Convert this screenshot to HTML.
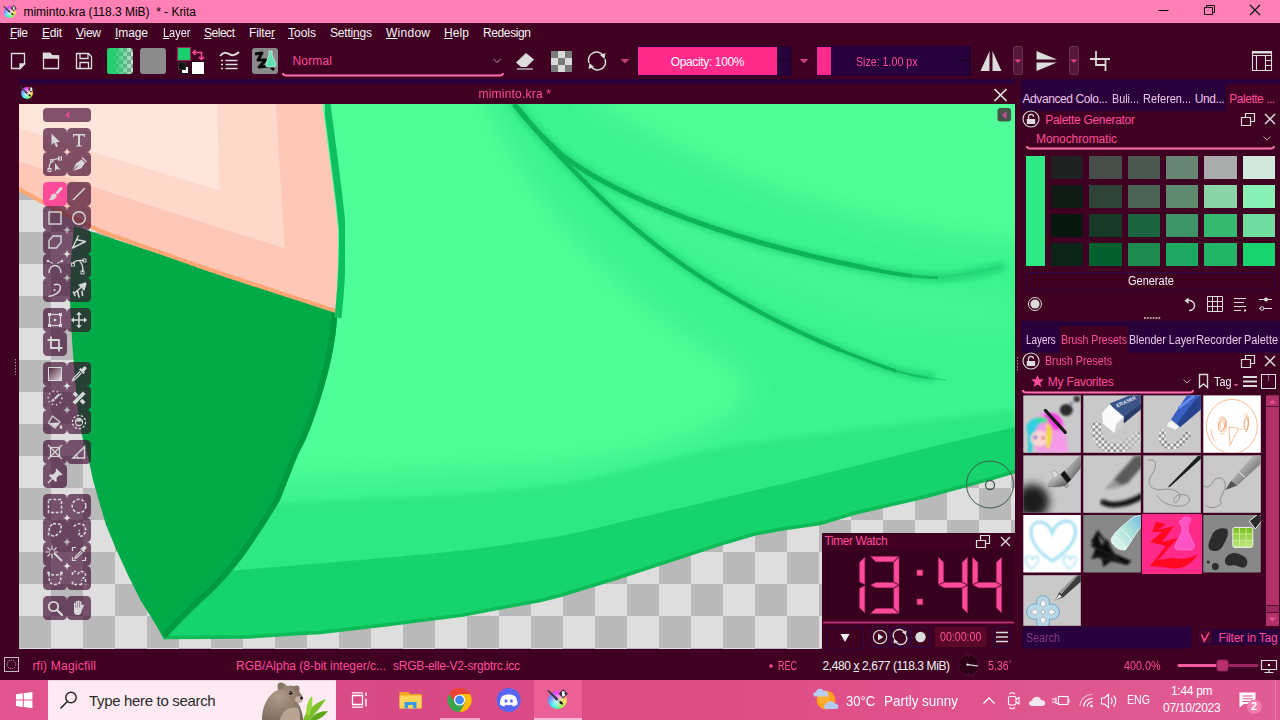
<!DOCTYPE html>
<html lang="en">
<head>
<meta charset="utf-8">
<title>miminto.kra (118.3 MiB) * - Krita</title>
<style>
*{box-sizing:border-box;margin:0;padding:0}
html,body{width:1280px;height:720px;overflow:hidden;background:#3f0022;font-family:"Liberation Sans","DejaVu Sans",sans-serif;font-size:12px;color:#f2f2f2}
.abs{position:absolute}
.t{position:absolute;white-space:nowrap;line-height:1}
.pk{color:#ff4c9a}
#titlebar{left:0;top:0;width:1280px;height:23px;background:#ff80b4}
#menubar{left:0;top:23px;width:1280px;height:21px;background:#3f0022}
#toolbar{left:0;top:44px;width:1280px;height:35px;background:#3f0022}
#strip{left:19px;top:79px;width:996px;height:5px;background:#28003c}
#canvas{left:19px;top:104px;width:996px;height:545px;overflow:hidden;background:#dedede}
#statusbar{left:0;top:652px;width:1280px;height:28px;background:#3f0022}
#taskbar{left:0;top:680px;width:1280px;height:40px;background:linear-gradient(90deg,#e2558e 0%,#d84a84 30%,#df4c86 55%,#df548d 78%,#e25c94 100%)}
.m{top:27px;font-size:13px;color:#f4f4f4}
.m u{text-decoration:underline;text-underline-offset:1px}
.tab{font-size:12.500px;color:#f0c4ea}
.tab.pk{color:#ff4c9a}
.sb{top:659.7px;font-size:12.500px}
/* SECTION-CSS */
</style>
</head>
<body>
<div id="titlebar" class="abs"></div>
<div id="menubar" class="abs"></div>
<div id="toolbar" class="abs"></div>
<div id="strip" class="abs"></div>
<div id="canvas" class="abs">
<svg class="abs" style="left:0;top:0" width="996" height="545" viewBox="19 104 996 545">
<defs>
<pattern id="chk" x="19" y="104" width="64" height="64" patternUnits="userSpaceOnUse">
<rect width="64" height="64" fill="#dedede"/><rect width="32" height="32" fill="#b9b9b9"/><rect x="32" y="32" width="32" height="32" fill="#b9b9b9"/>
</pattern>
<clipPath id="mintclip"><path id="mintp" d="M323,104 L1015,104 L1015,471.5 L992.5,478.4 L924,497 L855,513 L820,523.5 L782,529 L754.4,534 L726.7,542.2 L671,560.3 L615.5,578.5 L560,595.5 L540,600.5 L463,615 L385,625 L320,632.5 L300,633.5 L248,637 L163,637.5 L150,600 L323,300 Z"/></clipPath>
<filter id="b6" x="-20%" y="-20%" width="140%" height="140%"><feGaussianBlur stdDeviation="6"/></filter>
<filter id="b14" x="-30%" y="-30%" width="160%" height="160%"><feGaussianBlur stdDeviation="14"/></filter>
<filter id="b3" x="-20%" y="-20%" width="140%" height="140%"><feGaussianBlur stdDeviation="2.5"/></filter>
<filter id="b1"><feGaussianBlur stdDeviation="0.7"/></filter>
</defs>
<rect x="19" y="104" width="996" height="545" fill="url(#chk)"/>
<!-- mint body -->
<g clip-path="url(#mintclip)">
<rect x="19" y="104" width="996" height="545" fill="#4ffd96"/>
<!-- shading -->
<rect x="19" y="104" width="996" height="545" fill="#3cf38d"/>
<path d="M280,60 L470,60 C520,200 620,300 740,370 C780,410 680,450 560,465 L240,480 L300,300 Z" fill="#50fe98" filter="url(#b14)"/>
<path d="M590,50 L1060,50 L1060,245 C900,235 760,200 590,100 Z" fill="#50fe98" filter="url(#b14)"/>
<path d="M620,210 C700,250 800,300 900,320 L1015,330 L1015,300 C900,290 760,260 640,190 Z" fill="#4afa94" filter="url(#b14)" opacity=".8"/>
<!-- band 2 -->
<path d="M150,515 L300,502 C360,499 420,497 462,494 C500,491 530,488 560,484 C585,480 605,476 625,471 C650,465 675,458 700,452 C730,446 755,442 782,439 C820,434 860,429 900,424 L1015,410 L1015,700 L150,700 Z" fill="#2fe883" filter="url(#b3)"/>
<!-- band 3 -->
<path d="M120,580 L215,572 L300,565 C360,560 420,555 462,550.500 C500,546 530,541 560,536 C585,531 605,526 625,521 C655,514 680,508 706,502 C735,495 760,489 782,484 L855,466 L935,446 L1015,427 L1015,700 L120,700 Z" fill="#18d46c" filter="url(#b1)"/>
</g>
<!-- bottom edge darker line -->
<path d="M1015,471.5 L992.5,478.4 L924,497 L855,513 L820,523.5 L782,529 L754.4,534 L726.7,542.2 L671,560.3 L615.5,578.5 L560,595.5 L540,600.5 L463,615 L385,625 L320,632.5 L300,633.5 L248,637 L163,637.5" fill="none" stroke="#0cba56" stroke-width="3.5" filter="url(#b1)"/>
<!-- hair strokes -->
<g fill="none" stroke="#22d878" stroke-linecap="round" filter="url(#b3)" opacity=".8">
<path d="M515,105 C530,125 545,140 562,155 C600,185 700,235 866,268 C900,275 930,279 950,277 C970,275 990,270 1000,267" stroke-width="11"/>
<path d="M519,109 C535,130 550,147 575,172 C640,240 720,300 866,361 C890,370 910,375 931,377" stroke-width="10"/>
</g>
<g fill="none" stroke="#0db458" stroke-linecap="butt" filter="url(#b1)">
<path d="M514,104 C530,125 545,140 562,155 C600,185 700,235 866,268" stroke-width="5"/>
<path d="M866,268 C885,272 900,274.500 912,276" stroke-width="4"/>
<path d="M912,276 C922,277 930,277.500 938,277.500" stroke-width="2.800" opacity=".8"/>
<path d="M938,277.500 C960,276 985,270 1000,267" stroke="#20d070" stroke-width="2.500" opacity=".5"/>
<path d="M519,109 C535,130 550,147 575,172 C640,240 720,300 840,350" stroke-width="4.500"/>
<path d="M840,350 C860,358 880,366 896,371" stroke-width="3.500"/>
<path d="M896,371 C908,374.500 918,376.500 928,378" stroke-width="2.300" opacity=".75"/>
<path d="M928,378 C934,379 940,379.500 946,380" stroke-width="1.500" opacity=".4"/>
</g>
<!-- dark green -->
<path d="M74,226 L337.5,312 C336,345 328,375 320,400 C312,425 306,440 300,450 C292,468 286,485 280,500 C268,520 258,535 247.5,550 C235,568 215,590 202.5,600 C190,612 178,624 167,636 L163.300,638 L156,625 L140.400,600 L128,575 L116.500,550 L106,525 L98.700,500 L93,480 L87.700,455 L83,440 L79,420 L75,380 L72,340 L70,300 L71,260 Z" fill="#00ab47"/>
<path d="M337.5,312 C336,345 328,375 320,400 C312,425 306,440 300,450 C292,468 286,485 280,500 C268,520 258,535 247.5,550 C235,568 215,590 202.5,600 C190,612 178,624 167,636" fill="none" stroke="#00953c" stroke-width="6" opacity=".7" filter="url(#b1)" transform="translate(-3,0)"/>
<!-- peach -->
<path d="M19,104 L322.500,104 C328,150 336,200 338,230 C338.500,260 337,290 336,312 C300,300 260,288 199,267 C160,253 130,243 100,232 C70,218 40,202 19,190 Z" fill="#ffc7b7"/>
<path d="M19,104 L276,104 L284.500,248 C200,222 100,190 19,161 Z" fill="#ffd8cc" filter="url(#b1)"/>
<path d="M19,104 L217,104 L219.500,190 C150,170 80,148 19,128 Z" fill="#ffe6dc" filter="url(#b1)"/>
<!-- orange edge -->
<path d="M336,311 C300,299 260,287 199,266 C160,252 130,242 100,231 C70,217 40,201 19,189" fill="none" stroke="#ffa674" stroke-width="4" filter="url(#b1)"/>
<!-- green outline right of peach -->
<path d="M327,104 C333,150 340,200 342.500,230 C343,260 341,290 338,318" fill="none" stroke="#0fbf5e" stroke-width="7" filter="url(#b1)"/>
<!-- brush cursor -->
<circle cx="990" cy="484.500" r="23.500" fill="none" stroke="#3d5a48" stroke-width="1"/>
<circle cx="990" cy="485" r="4.500" fill="none" stroke="#3d5a48" stroke-width="1.300"/>
</svg>

</div>
<!-- TOOLBOX-START -->
<svg class="abs" style="left:43px;top:108px" width="48" height="516" viewBox="43 108 48 516">
<rect x="43" y="108" width="48" height="14" rx="4" fill="rgba(60,5,44,.65)"/><path d="M65,115 L69.500,111 V119 Z" fill="#d84a8c"/>
<g transform="translate(43,128)"><rect width="24" height="24" rx="4.500" fill="rgba(60,5,44,.65)"/><path d="M8.500,5.500 V17 L11.200,14.600 L13,19 L15,18.200 L13.200,14 H17 Z" fill="#d8d8d8"/></g>
<g transform="translate(67,128)"><rect width="24" height="24" rx="4.500" fill="rgba(60,5,44,.65)"/><path d="M6,6 H18 V9 H17 V7.500 H13 V17.500 H15 V18.500 H9 V17.500 H11 V7.500 H7 V9 H6 Z" fill="#d8d8d8"/></g>
<g transform="translate(43,152)"><rect width="24" height="24" rx="4.500" fill="rgba(60,5,44,.65)"/><path d="M6,18 C6,11 8,7 17,6.500" fill="none" stroke="#d8d8d8" stroke-width="1.200"/><rect x="5" y="16.500" width="3" height="3" fill="none" stroke="#d8d8d8"/><rect x="15.500" y="5" width="3" height="3" fill="none" stroke="#d8d8d8"/><rect x="7.500" y="7.500" width="2.500" height="2.500" fill="none" stroke="#d8d8d8" stroke-width=".8"/><path d="M12,11 V19 L14.200,16.800 L17.500,18 Z" fill="#d8d8d8"/></g>
<g transform="translate(67,152)"><rect width="24" height="24" rx="4.500" fill="rgba(60,5,44,.65)"/><path d="M5.500,19 L9,11.500 L14.500,7.500 L18,11 L14,16.500 Z" fill="#d8d8d8"/><path d="M15,5.500 L19.500,10" stroke="#d8d8d8" stroke-width="1.400"/><path d="M5.500,19 L11,13.500" stroke="#6a3a52" stroke-width="1"/></g>
<g transform="translate(43,182)"><rect width="24" height="24" rx="4.500" fill="#ff4c9a"/><path d="M18.500,5 C19.500,5.500 19.800,6.500 19,7.500 L14.500,12.500 L12.500,10.800 L16.800,5.600 C17.300,5 18,4.800 18.500,5 Z M11.800,11.600 L13.800,13.300 C13.500,16.500 10.500,18.500 5.500,18.200 C7.500,17 7.500,15 8.200,13.500 C9,12 10.500,11.300 11.800,11.600 Z" fill="#d8d8d8"/></g>
<g transform="translate(67,182)"><rect width="24" height="24" rx="4.500" fill="rgba(60,5,44,.65)"/><path d="M6,18 L18,6" stroke="#d8d8d8" stroke-width="1.500"/></g>
<g transform="translate(43,206)"><rect width="24" height="24" rx="4.500" fill="rgba(60,5,44,.65)"/><rect x="6" y="6" width="12" height="12" fill="none" stroke="#d8d8d8" stroke-width="1.400"/></g>
<g transform="translate(67,206)"><rect width="24" height="24" rx="4.500" fill="rgba(60,5,44,.65)"/><circle cx="12" cy="12" r="6.300" fill="none" stroke="#d8d8d8" stroke-width="1.400"/></g>
<g transform="translate(43,230)"><rect width="24" height="24" rx="4.500" fill="rgba(60,5,44,.65)"/><path d="M10,6 H18 V12.500 L13.500,18 H6 V10.500 Z" fill="none" stroke="#d8d8d8" stroke-width="1.400"/></g>
<g transform="translate(67,230)"><rect width="24" height="24" rx="4.500" fill="rgba(60,5,44,.65)"/><path d="M11.500,5.500 L5.500,18 L18.500,11.500 L9,9.500" fill="none" stroke="#d8d8d8" stroke-width="1.400" stroke-linejoin="round"/></g>
<g transform="translate(43,254)"><rect width="24" height="24" rx="4.500" fill="rgba(60,5,44,.65)"/><path d="M6,19 C6,9 18,9 18,19" fill="none" stroke="#d8d8d8" stroke-width="1.400"/><path d="M5,7 L10,9.500 M19,7 L14,9.500" stroke="#d8d8d8" stroke-width="1"/><circle cx="5" cy="7" r="1.300" fill="#d8d8d8"/><circle cx="19" cy="7" r="1.300" fill="#d8d8d8"/></g>
<g transform="translate(67,254)"><rect width="24" height="24" rx="4.500" fill="rgba(60,5,44,.65)"/><path d="M6,10 C7,6.500 12,6 17,6.500 M12,6.200 C15,9 16.500,13 15.500,18" fill="none" stroke="#d8d8d8" stroke-width="1.400"/><rect x="4.500" y="9" width="3" height="3" fill="none" stroke="#d8d8d8" stroke-width=".9"/><rect x="16" y="5" width="3" height="3" fill="none" stroke="#d8d8d8" stroke-width=".9"/><rect x="14" y="17" width="3" height="3" fill="none" stroke="#d8d8d8" stroke-width=".9"/></g>
<g transform="translate(43,278)"><rect width="24" height="24" rx="4.500" fill="rgba(60,5,44,.65)"/><path d="M5.500,18.500 C12,17.500 17.500,14 17.500,9.500 C17.500,6.500 14,5.500 11,7" fill="none" stroke="#d8d8d8" stroke-width="1.400"/><circle cx="11.500" cy="12" r="1.100" fill="#d8d8d8"/></g>
<g transform="translate(67,278)"><rect width="24" height="24" rx="4.500" fill="rgba(60,5,44,.65)"/><path d="M19,5 L12.500,7 L14.500,9 L7,15.500 M19,5 L17,11.500 L15,9.500" fill="none" stroke="#d8d8d8" stroke-width="1.500"/><path d="M19,5 L13,6.500 L17.500,11 Z" fill="#d8d8d8"/><path d="M6.500,14 L8,17.500 M10.500,13 L12,19 M15,13 L15.500,17.500" stroke="#d8d8d8" stroke-width="1.600" stroke-linecap="round"/></g>
<g transform="translate(43,308)"><rect width="24" height="24" rx="4.500" fill="rgba(60,5,44,.65)"/><rect x="6.500" y="6.500" width="11" height="11" fill="none" stroke="#d8d8d8" stroke-width="1.300"/><g fill="#d8d8d8"><rect x="5" y="5" width="3" height="3"/><rect x="16" y="5" width="3" height="3"/><rect x="5" y="16" width="3" height="3"/><rect x="16" y="16" width="3" height="3"/><rect x="10.800" y="10.800" width="2.400" height="2.400"/></g></g>
<g transform="translate(67,308)"><rect width="24" height="24" rx="4.500" fill="rgba(60,5,44,.65)"/><path d="M12,5 V19 M5,12 H19" stroke="#d8d8d8" stroke-width="1.500"/><path d="M12,3.800 L14.800,7 H9.200 Z M12,20.200 L14.800,17 H9.200 Z M3.800,12 L7,9.200 V14.800 Z M20.200,12 L17,9.200 V14.800 Z" fill="#d8d8d8"/></g>
<g transform="translate(43,332)"><rect width="24" height="24" rx="4.500" fill="rgba(60,5,44,.65)"/><path d="M8,4.500 V16 H19.500 M4.500,8 H16 V19.500" fill="none" stroke="#d8d8d8" stroke-width="1.800"/></g>
<g transform="translate(43,362)"><rect width="24" height="24" rx="4.500" fill="rgba(60,5,44,.65)"/><defs><linearGradient id="tg" x1="0" y1="0" x2="1" y2="1"><stop offset="0" stop-color="#4a2038"/><stop offset="1" stop-color="#e8e0e4"/></linearGradient></defs><rect x="5.500" y="5.500" width="13" height="13" fill="url(#tg)" stroke="#d8d8d8" stroke-width="1"/></g>
<g transform="translate(67,362)"><rect width="24" height="24" rx="4.500" fill="rgba(60,5,44,.65)"/><path d="M17,4.500 C18.500,4 20,5.500 19.500,7 L17,9.500 L18,10.500 L16.500,12 L12,7.500 L13.500,6 L14.500,7 Z" fill="#d8d8d8"/><path d="M13,9.500 L6.500,16 L5.500,18.500 L8,17.500 L14.500,11" fill="none" stroke="#d8d8d8" stroke-width="1.300"/></g>
<g transform="translate(43,386)"><rect width="24" height="24" rx="4.500" fill="rgba(60,5,44,.65)"/><path d="M15.500,7.500 L11,12 L12.500,13.500 L17,9 Z M10.300,12.600 C9,13 9,14.500 7.800,15.300 C9.500,16 11.500,15.300 11.800,14 Z" fill="#d8d8d8"/><circle cx="12" cy="12" r="6.800" fill="none" stroke="#d8d8d8" stroke-width="1.600" stroke-dasharray="1.300 2.900"/></g>
<g transform="translate(67,386)"><rect width="24" height="24" rx="4.500" fill="rgba(60,5,44,.65)"/><path d="M8,5.500 L11.300,8.800 L8.800,11.300 L5.500,8 Z M15.200,12.700 L18.500,16 L16,18.500 L12.700,15.200 Z M16,5.500 L18.500,8 L8,18.500 L5.500,16 Z" fill="#d8d8d8"/></g>
<g transform="translate(43,410)"><rect width="24" height="24" rx="4.500" fill="rgba(60,5,44,.65)"/><path d="M9.500,6 L17,12 L12,18 L5.500,13 Z" fill="none" stroke="#d8d8d8" stroke-width="1.200"/><path d="M6.500,13 L16,12.500 L12,17.300 Z" fill="#d8d8d8"/><path d="M18,14.500 C19.200,16.300 19.300,17 19.300,17.500 C19.300,18.300 18.700,18.800 18,18.800 C17.300,18.800 16.700,18.300 16.700,17.500 C16.700,17 16.900,16.300 18,14.500 Z" fill="#d8d8d8"/></g>
<g transform="translate(67,410)"><rect width="24" height="24" rx="4.500" fill="rgba(60,5,44,.65)"/><circle cx="12" cy="12" r="6.600" fill="none" stroke="#d8d8d8" stroke-width="1.300" stroke-dasharray="2.400 1.700"/><circle cx="12" cy="12" r="3.600" fill="none" stroke="#d8d8d8" stroke-width="1.100"/><path d="M8.800,11.500 H15.200 A3.300,3.300 0 0 0 8.800,11.500 Z" fill="#d8d8d8"/></g>
<g transform="translate(43,440)"><rect width="24" height="24" rx="4.500" fill="rgba(60,5,44,.65)"/><rect x="7.500" y="7.500" width="9" height="9" fill="none" stroke="#d8d8d8" stroke-width="1.200"/><path d="M5,5 L19,19 M19,5 L5,19" stroke="#d8d8d8" stroke-width="1.300"/></g>
<g transform="translate(67,440)"><rect width="24" height="24" rx="4.500" fill="rgba(60,5,44,.65)"/><path d="M6,18 L17.500,6.700 V18 Z" fill="none" stroke="#d8d8d8" stroke-width="1.500"/><path d="M10.500,18 A4.500,4.500 0 0 0 9.300,14.800" fill="none" stroke="#d8d8d8" stroke-width="1.100"/></g>
<g transform="translate(43,464)"><rect width="24" height="24" rx="4.500" fill="rgba(60,5,44,.65)"/><path d="M13.500,4.500 L19.500,10.500 L18,11.500 L16.500,11 L13.500,14 L13.800,17 L12.500,18 L6,11.500 L7,10.200 L10,10.500 L13,7.500 L12.500,6 Z" fill="#d8d8d8"/><path d="M9.500,14.500 L5,19" stroke="#d8d8d8" stroke-width="1.400"/></g>
<g transform="translate(43,494)"><rect width="24" height="24" rx="4.500" fill="rgba(60,5,44,.65)"/><rect x="5.500" y="5.500" width="13" height="13" fill="none" stroke="#d8d8d8" stroke-width="1.600" stroke-dasharray="3 1.800"/></g>
<g transform="translate(67,494)"><rect width="24" height="24" rx="4.500" fill="rgba(60,5,44,.65)"/><circle cx="12" cy="12" r="6.800" fill="none" stroke="#d8d8d8" stroke-width="1.600" stroke-dasharray="3 1.900"/></g>
<g transform="translate(43,518)"><rect width="24" height="24" rx="4.500" fill="rgba(60,5,44,.65)"/><path d="M10,5.500 L18.500,6.500 L17.500,13.500 L12,18.500 L5.500,16.500 L6.500,9 Z" fill="none" stroke="#d8d8d8" stroke-width="1.600" stroke-dasharray="3 1.800"/></g>
<g transform="translate(67,518)"><rect width="24" height="24" rx="4.500" fill="rgba(60,5,44,.65)"/><path d="M7,8.500 C9,5 16,4.500 18,9 C20,13.500 17,18 13,18.500 C11.500,18.500 11.500,16.500 12.500,15.500 C13.500,14.500 13,12.500 11.500,12.500" fill="none" stroke="#d8d8d8" stroke-width="1.600" stroke-dasharray="2.800 1.700"/></g>
<g transform="translate(43,542)"><rect width="24" height="24" rx="4.500" fill="rgba(60,5,44,.65)"/><path d="M11,11 L19,19" stroke="#d8d8d8" stroke-width="2"/><path d="M9,3.500 V8 M9,12 V16.500 M2.500,10 H7 M11,10 H15 M4.500,5.500 L7.500,8.500 M13.500,5.500 L10.500,8.500 M4.500,14.500 L7.500,11.500" stroke="#d8d8d8" stroke-width="1.200"/></g>
<g transform="translate(67,542)"><rect width="24" height="24" rx="4.500" fill="rgba(60,5,44,.65)"/><path d="M5.500,9 V5.500 H9 M15,5.500 H18.500 M18.500,15 V18.500 H15 M9,18.500 H5.500 V15" fill="none" stroke="#d8d8d8" stroke-width="1.200"/><path d="M17,4 C18.500,3.600 19.800,5 19.400,6.500 L17.300,8.600 L18,9.300 L16.800,10.500 L13.300,7 L14.500,5.800 L15.200,6.500 Z" fill="#d8d8d8"/><path d="M14,9 L8.500,14.500 L7.800,16.500 L9.800,15.800 L15.300,10.300" fill="none" stroke="#d8d8d8" stroke-width="1.100"/></g>
<g transform="translate(43,566)"><rect width="24" height="24" rx="4.500" fill="rgba(60,5,44,.65)"/><path d="M6,7.500 C6,16 7,18.500 12,18.500 C17,18.500 18,16 18,7.500 C15,9.500 9,9.500 6,7.500 Z" fill="none" stroke="#d8d8d8" stroke-width="1.600" stroke-dasharray="2.800 1.700"/><circle cx="5.500" cy="7" r="1.400" fill="#d8d8d8"/><circle cx="18.500" cy="7" r="1.400" fill="#d8d8d8"/></g>
<g transform="translate(67,566)"><rect width="24" height="24" rx="4.500" fill="rgba(60,5,44,.65)"/><path d="M5.500,9 V5.500 H9 M15,18.500 H5.500 V14" fill="none" stroke="#d8d8d8" stroke-width="1.600" stroke-dasharray="3 1.800"/><path d="M11,8.500 C11,4.500 18.500,4.500 18.500,9 C18.500,12 14.500,12 14.500,15" fill="none" stroke="#d8d8d8" stroke-width="1.600" stroke-dasharray="2.800 1.500"/><circle cx="14.500" cy="18" r="1" fill="#d8d8d8"/><path d="M18.500,13 V18.500" stroke="#d8d8d8" stroke-width="1.600" stroke-dasharray="3 1.800"/></g>
<g transform="translate(43,596)"><rect width="24" height="24" rx="4.500" fill="rgba(60,5,44,.65)"/><circle cx="10.500" cy="10.500" r="4.700" fill="none" stroke="#d8d8d8" stroke-width="1.800"/><path d="M14,14 L19,19" stroke="#d8d8d8" stroke-width="2.400" stroke-linecap="round"/></g>
<g transform="translate(67,596)"><rect width="24" height="24" rx="4.500" fill="rgba(60,5,44,.65)"/><path d="M7,12 V7.500 C7,6.300 8.800,6.300 8.800,7.500 V6 C8.800,4.700 10.700,4.700 10.700,6 V5.500 C10.700,4.200 12.600,4.200 12.600,5.500 V6.200 C12.600,5 14.500,5 14.500,6.200 V9.500 C15,8.500 16.500,8 17,9 L15,14 C14.500,16.500 13.500,19 11.500,19 H10 C8,19 7,17.500 7,15.500 Z" fill="#d8d8d8"/><path d="M8.800,7.500 V12 M10.700,6 V11.500 M12.600,6 V11.500" stroke="#6a3a52" stroke-width=".5"/></g>
</svg>
<!-- TOOLBOX-END -->
<!-- ===== right docker 1 ===== -->
<div class="abs" style="left:1021px;top:79px;width:259px;height:32px;background:#28003c"></div>
<div class="abs" style="left:1226px;top:84px;width:54px;height:27px;background:#3f0022;border-radius:3px 0 0 0"></div>
<div class="t tab" style="left:1022.5px;top:93px;font-size:12px;letter-spacing:-0.419px">Advanced Colo...</div>
<div class="t tab" style="left:1111.6px;top:93px;font-size:12px;letter-spacing:0px;transform:scaleX(0.8962);transform-origin:0 0">Buli...</div>
<div class="t tab" style="left:1143.3px;top:93px;font-size:12px;letter-spacing:0px;transform:scaleX(0.9127);transform-origin:0 0">Referen...</div>
<div class="t tab" style="left:1194.7px;top:93px;font-size:12px;letter-spacing:-0.403px">Und...</div>
<div class="t tab pk" style="left:1229.3px;top:93px;font-size:12px;letter-spacing:-0.480px">Palette ...</div>
<svg class="abs" style="left:1021px;top:110px" width="259" height="212" viewBox="1021 110 259 212">
<!-- lock -->
<g id="lockic"><circle cx="1031" cy="119" r="8" fill="none" stroke="#dcdcdc" stroke-width="1.100"/><rect x="1026.800" y="119" width="8.400" height="5" fill="#dcdcdc"/><path d="M1028.500,119 V116.800 A2.500,2.500 0 0 1 1033.500,116.800" fill="none" stroke="#dcdcdc" stroke-width="1.200"/></g>
<g id="floatic" fill="none" stroke="#dcdcdc" stroke-width="1.200"><path d="M1241.500,117.500 H1250.500 V125.500 H1241.500 Z"/><path d="M1245.500,117.500 V113.500 H1254.500 V121.500 H1250.500"/></g>
<path id="closeic" d="M1265,114 L1275,124 M1275,114 L1265,124" stroke="#dcdcdc" stroke-width="1.500"/>
<!-- combo underline -->
<path d="M1027,146 Q1027,148.500 1030,148.500 H1271 Q1274,148.500 1274,146" fill="none" stroke="#ff6eb0" stroke-width="1.900"/>
<path d="M1263.500,136.500 L1267,140 L1270.500,136.500" fill="none" stroke="#b8a0ac" stroke-width="1"/>
<!-- palette -->
<rect x="1026" y="156" width="19" height="110" fill="#2fe984"/>
<g>
<rect x="1051" y="156" width="32" height="23" fill="#202221"/><rect x="1089" y="156" width="33" height="23" fill="#474e4a"/><rect x="1128" y="156" width="32" height="23" fill="#4a584f"/><rect x="1166" y="156" width="32" height="23" fill="#668572"/><rect x="1204" y="156" width="33" height="23" fill="#a9acaa"/><rect x="1243" y="156" width="32" height="23" fill="#d3e8dc"/>
<rect x="1051" y="185" width="32" height="23" fill="#101b15"/><rect x="1089" y="185" width="33" height="23" fill="#2f4338"/><rect x="1128" y="185" width="32" height="23" fill="#4a6454"/><rect x="1166" y="185" width="32" height="23" fill="#5e8a70"/><rect x="1204" y="185" width="33" height="23" fill="#8ad4a8"/><rect x="1243" y="185" width="32" height="23" fill="#88f0b4"/>
<rect x="1051" y="214" width="32" height="23" fill="#08170e"/><rect x="1089" y="214" width="33" height="23" fill="#173a27"/><rect x="1128" y="214" width="32" height="23" fill="#1c6440"/><rect x="1166" y="214" width="32" height="23" fill="#3e9467"/><rect x="1204" y="214" width="33" height="23" fill="#35b872"/><rect x="1243" y="214" width="32" height="23" fill="#70dca0"/>
<rect x="1051" y="243" width="32" height="23" fill="#0a2417"/><rect x="1089" y="243" width="33" height="23" fill="#04602f"/><rect x="1128" y="243" width="32" height="23" fill="#1e8a50"/><rect x="1166" y="243" width="32" height="23" fill="#1ca860"/><rect x="1204" y="243" width="33" height="23" fill="#22b468"/><rect x="1243" y="243" width="32" height="23" fill="#18d46c"/>
</g>
<!-- generate button -->
<rect x="1026.500" y="272.500" width="248" height="17" rx="2" fill="#3f0022" stroke="#2a0a4a" stroke-width="1"/>
<!-- icon row -->
<circle cx="1035" cy="304" r="6.500" fill="none" stroke="#dcdcdc" stroke-width="1"/><circle cx="1035" cy="304" r="4.600" fill="#dcdcdc"/>
<path d="M1186,300.500 C1191,299.500 1194.500,302 1194.500,305.500 C1194.500,308.500 1192,310.500 1189,310.500" fill="none" stroke="#dcdcdc" stroke-width="1.400"/><path d="M1184.500,300.800 L1188.500,297.500 V304 Z" fill="#dcdcdc"/>
<path d="M1207.500,296.500 H1222.500 V311.500 H1207.500 Z M1212.500,296.500 V311.500 M1217.500,296.500 V311.500 M1207.500,301.500 H1222.500 M1207.500,306.500 H1222.500" fill="none" stroke="#dcdcdc" stroke-width="1"/>
<path d="M1234,298.500 H1246 M1234,302.500 H1244 M1234,306.500 H1246 M1234,310.500 H1241" stroke="#dcdcdc" stroke-width="1.100"/><rect x="1244" y="309.500" width="2" height="2" fill="#dcdcdc"/>
<path d="M1259,299.500 H1272 M1259,308.500 H1272" stroke="#dcdcdc" stroke-width="1.100"/><circle cx="1266" cy="299.500" r="2" fill="#dcdcdc"/><circle cx="1262" cy="308.500" r="1.800" fill="#3f0022" stroke="#dcdcdc" stroke-width="1"/>
<!-- dots -->
<path d="M1144,318 H1161" stroke="#b8a0b0" stroke-width="1.800" stroke-dasharray="1.700 1.200"/>
</svg>
<div class="t pk" style="left:1045.3px;top:113.5px;font-size:12px;letter-spacing:-0.315px">Palette Generator</div>
<div class="t pk" style="left:1036px;top:133.3px;font-size:12px;letter-spacing:-0.086px">Monochromatic</div>
<div class="t" style="left:1128px;top:274.6px;color:#f4f4f4;font-size:12px;letter-spacing:0px;transform:scaleX(0.9151);transform-origin:0 0">Generate</div>

<!-- ===== right docker 2 ===== -->
<div class="abs" style="left:1021px;top:321px;width:259px;height:31.500px;background:#28003c"></div>
<div class="abs" style="left:1060px;top:326px;width:68px;height:26.500px;background:#3f0022"></div>
<div class="t tab" style="left:1025.6px;top:334px;font-size:12px;letter-spacing:0px;transform:scaleX(0.8243);transform-origin:0 0">Layers</div>
<div class="t tab pk" style="left:1061px;top:334px;font-size:12px;letter-spacing:0px;transform:scaleX(0.8756);transform-origin:0 0">Brush Presets</div>
<div class="t tab" style="left:1129px;top:334px;font-size:12px;letter-spacing:0px;transform:scaleX(0.8900);transform-origin:0 0">Blender Layer</div>
<div class="t tab" style="left:1196.4px;top:334px;font-size:12px;letter-spacing:0px;transform:scaleX(0.9279);transform-origin:0 0">Recorder</div>
<div class="t tab" style="left:1243.6px;top:334px;font-size:12px;letter-spacing:0px;transform:scaleX(0.9101);transform-origin:0 0">Palette</div>
<svg class="abs" style="left:1015px;top:351px" width="265" height="300" viewBox="1015 351 265 300">
<defs>
<pattern id="bchk" width="6" height="6" patternUnits="userSpaceOnUse"><rect width="6" height="6" fill="#f4f4f4"/><rect width="3" height="3" fill="#8c8c8c"/><rect x="3" y="3" width="3" height="3" fill="#8c8c8c"/></pattern>
<filter id="bb2"><feGaussianBlur stdDeviation="1.600"/></filter>
<filter id="bb4" x="-60%" y="-60%" width="220%" height="220%"><feGaussianBlur stdDeviation="4"/></filter>
<filter id="bb1"><feGaussianBlur stdDeviation=".8"/></filter>
<linearGradient id="metal" x1="0" y1="0" x2="1" y2="1"><stop offset="0" stop-color="#f4f4f4"/><stop offset=".5" stop-color="#9a9a9a"/><stop offset="1" stop-color="#4a4a4a"/></linearGradient>
<linearGradient id="mint2" x1="0" y1="1" x2="1" y2="0"><stop offset="0" stop-color="#e8f8f0"/><stop offset=".6" stop-color="#a8e0d8"/><stop offset="1" stop-color="#70b8e8"/></linearGradient>
<linearGradient id="lime" x1="0" y1="0" x2="0" y2="1"><stop offset="0" stop-color="#78c020"/><stop offset="1" stop-color="#c0e880"/></linearGradient>
<clipPath id="c00"><rect x="1023.300" y="395.400" width="57.500" height="57.400"/></clipPath>
<clipPath id="c10"><rect x="1083.300" y="395.400" width="57.500" height="57.400"/></clipPath>
<clipPath id="c20"><rect x="1143.300" y="395.400" width="57.500" height="57.400"/></clipPath>
<clipPath id="c30"><rect x="1203.300" y="395.400" width="57.500" height="57.400"/></clipPath>
<clipPath id="c01"><rect x="1023.300" y="455.400" width="57.500" height="57.400"/></clipPath>
<clipPath id="c11"><rect x="1083.300" y="455.400" width="57.500" height="57.400"/></clipPath>
<clipPath id="c21"><rect x="1143.300" y="455.400" width="57.500" height="57.400"/></clipPath>
<clipPath id="c31"><rect x="1203.300" y="455.400" width="57.500" height="57.400"/></clipPath>
<clipPath id="c02"><rect x="1023.300" y="515" width="57.500" height="57.500"/></clipPath>
<clipPath id="c12"><rect x="1083.300" y="515" width="57.500" height="57.500"/></clipPath>
<clipPath id="c22"><rect x="1142" y="514" width="60" height="60"/></clipPath>
<clipPath id="c32"><rect x="1203.300" y="515" width="57.500" height="57.500"/></clipPath>
<clipPath id="c03"><rect x="1023.300" y="575.200" width="57.500" height="50.600"/></clipPath>
</defs>
<!-- handle dots left -->
<path d="M1017.500,357 V372" stroke="#a08898" stroke-width="1" stroke-dasharray="1.500 1.500"/>
<!-- title icons -->
<circle cx="1031" cy="361" r="8" fill="none" stroke="#dcdcdc" stroke-width="1.100"/><rect x="1026.800" y="361" width="8.400" height="5" fill="#dcdcdc"/><path d="M1028.500,361 V358.800 A2.500,2.500 0 0 1 1033.500,358.800" fill="none" stroke="#dcdcdc" stroke-width="1.200"/>
<g fill="none" stroke="#dcdcdc" stroke-width="1.200"><path d="M1241.500,359.500 H1250.500 V367.500 H1241.500 Z"/><path d="M1245.500,359.500 V355.500 H1254.500 V363.500 H1250.500"/></g>
<path d="M1265,356 L1275,366 M1275,356 L1265,366" stroke="#dcdcdc" stroke-width="1.500"/>
<!-- tag combo -->
<path d="M1023,390 Q1023,392.500 1026,392.500 H1190 Q1193,392.500 1193,390" fill="none" stroke="#ff6eb0" stroke-width="1.900"/>
<path d="M1183.500,379.500 L1187,383 L1190.500,379.500" fill="none" stroke="#b8a0ac" stroke-width="1"/>
<path d="M1032,378.500 L1037.500,374 L1043,378.500 L1041,385.500 H1034 Z" fill="none"/>
<path d="M1037.500,375 L1039.200,379.300 L1043.800,379.600 L1040.200,382.500 L1041.400,387 L1037.500,384.500 L1033.600,387 L1034.800,382.500 L1031.200,379.600 L1035.800,379.300 Z" fill="#ff4c9a"/>
<path d="M1199.500,374.500 H1207.500 V387.500 L1203.500,384 L1199.500,387.500 Z" fill="none" stroke="#dcdcdc" stroke-width="1.400"/>
<path d="M1233.500,384 H1238.500 L1236,386.500 Z" fill="#d84a8c"/>
<path d="M1243,377 H1257 M1243,381.500 H1257 M1243,386 H1257" stroke="#dcdcdc" stroke-width="1.800"/>
<rect x="1261.500" y="374.500" width="14" height="14" fill="none" stroke="#dcdcdc" stroke-width="1"/><path d="M1268.500,374.500 V381" stroke="#dcdcdc" stroke-width="1" stroke-dasharray="1 1"/>
<!-- scrollbar -->
<rect x="1266" y="395.500" width="13" height="230.500" fill="#9a2860"/>
<rect x="1266" y="407" width="13" height="198" fill="#b03068"/>
<rect x="1266" y="395.500" width="13" height="10.500" fill="#b03068"/><path d="M1269,403.500 H1276 L1272.500,399.500 Z" fill="#e8509a"/>
<rect x="1266" y="613" width="13" height="13" fill="#b03068"/><path d="M1268.500,617.500 H1276.500 L1272.500,621.500 Z" fill="#e8509a"/>
<path d="M1266,406.500 H1279 M1266,605.500 H1279 M1266,612.500 H1279" stroke="#5a0c34" stroke-width="1"/>
<!-- cell backgrounds -->
<g fill="#c9c9c9"><rect x="1023.300" y="395.400" width="57.500" height="57.400"/><rect x="1083.300" y="395.400" width="57.500" height="57.400"/><rect x="1143.300" y="395.400" width="57.500" height="57.400"/>
<rect x="1023.300" y="455.400" width="57.500" height="57.400"/><rect x="1083.300" y="455.400" width="57.500" height="57.400"/><rect x="1143.300" y="455.400" width="57.500" height="57.400"/><rect x="1203.300" y="455.400" width="57.500" height="57.400"/>
<rect x="1023.300" y="575.200" width="57.500" height="50.600"/></g>
<rect x="1203.300" y="395.400" width="57.500" height="57.400" fill="#fff"/>
<rect x="1023.300" y="515" width="57.500" height="57.500" fill="#fff"/>
<rect x="1083.300" y="515" width="57.500" height="57.500" fill="#888"/>
<rect x="1142" y="514" width="60" height="60" fill="#ff2a8a"/>
<rect x="1203.300" y="515" width="57.500" height="57.500" fill="#888"/>
<!-- THUMBS-START -->
<!-- cell 0,0 girl -->
<g clip-path="url(#c00)"><g transform="translate(1023.300,395.400)">
<g filter="url(#bb1)">
<circle cx="53.500" cy="3.500" r="3.200" fill="#3a3a3a"/><circle cx="48" cy="8" r="1.800" fill="#8a80a0"/><ellipse cx="43" cy="14.500" rx="6.500" ry="6" fill="#2c2c2c"/>
<path d="M14,22 C18,14 34,14 40,26 C44,36 42,48 46,57 L14,57 C10,48 10,32 14,22 Z" fill="#f49ae8"/>
<path d="M20,20 C26,15 36,17 39,26 C40,32 36,36 30,34 Z" fill="#f040e0"/>
<path d="M3,32 C6,22 16,20 24,24 C18,26 14,30 12,36 C10,44 8,52 9,57 L5,57 C4,48 6,40 3,32 Z" fill="#30d0e0"/>
<path d="M12,24 C16,20 22,21 25,25 L20,28 Z" fill="#40e090"/>
<ellipse cx="16" cy="43" rx="8.500" ry="8" fill="#f8d8d4"/>
<path d="M24,27 C30,30 30,42 26,52 C24,56 22,52 23,46 C24,40 22,32 24,27 Z" fill="#f0d830"/>
<circle cx="12" cy="42" r="1.800" fill="#7060d0"/><circle cx="20" cy="42.500" r="1.800" fill="#e07060"/>
</g>
<path d="M22,15 L42,37" stroke="#1a1a1a" stroke-width="3.200" stroke-linecap="round"/>
</g></g>
<!-- cell 1,0 eraser -->
<g clip-path="url(#c10)"><g transform="translate(1083.300,395.400)">
<path d="M13,31 C13,44 20,53 30,53 C40,53 48,48 54,42" fill="none" stroke="url(#bchk)" stroke-width="10" stroke-linecap="round" opacity=".9"/>
<path d="M40,50 C46,48 50,45 56,40" fill="none" stroke="#c9c9c9" stroke-width="12" opacity=".55"/>
<path d="M26.300,8 L49.200,-1 L58,-1 L58,13.700 L40.600,27 Z" fill="#3b5488"/>
<path d="M40.600,21.500 L58,8 L58,13.700 L40.600,28 Z" fill="#2a3c66"/>
<path d="M18.700,17.500 L26.300,9 L40.600,21.300 L39.600,28 L31,37.500 L19.600,28 Z" fill="#fafafa"/>
<path d="M31,37.500 L39.600,28 L40.600,21.300 L33,28.500 Z" fill="#d0d0d4"/>
<text x="34" y="12" font-size="5" fill="#e8ecf8" font-family="Liberation Sans,sans-serif" font-weight="bold" transform="rotate(-24 34 12)">ERASER</text>
</g></g>
<!-- cell 2,0 blue eraser pen -->
<g clip-path="url(#c20)"><g transform="translate(1143.300,395.400)">
<path d="M19.400,37.500 C17,44 20,50 27,51 C34,51 40,46 44.200,39.500" fill="none" stroke="url(#bchk)" stroke-width="6.500" stroke-linecap="round"/>
<path d="M44.200,-1 L58,-1 L58,13.700 L36.600,31.800 L27,25 Z" fill="#3a60c4"/>
<path d="M52,4 L58,0 L58,13.700 L36.600,31.800 L33,29 Z" fill="#27428e"/>
<path d="M36,12 L50,1" stroke="#6a8cf0" stroke-width="2.500" stroke-linecap="round"/>
<path d="M24.500,27 L28,24.500 L36,31 L32.500,35 L23,31 Z" fill="#f4f4f4" stroke="#b0b0b0" stroke-width=".5"/>
</g></g>
<!-- cell 3,0 orange face -->
<g clip-path="url(#c30)"><g transform="translate(1203.300,395.400)" fill="none" stroke="#f0a070" stroke-width=".7">
<ellipse cx="28.600" cy="31" rx="25.500" ry="27"/>
<path d="M15,24 C20,18 24,24 22,30 C20,38 15,38 15,30 C15,24 21,22 22,28 C23,34 18,36 17,30 C16,25 20,24 21,29 C22,33 18,40 16,34 C14,28 18,20 22,24 C26,30 20,42 17,38"/>
<path d="M41,20 C45,16 46,24 45,30 C44,36 41,36 41,30 C41,24 44,20 45,26 C46,32 42,38 41,32 C40,26 43,18 44,22 C46,28 44,38 42,36"/>
<path d="M25.700,31.800 L35.300,32.800 L26.700,50 Z"/>
<path d="M8,34 C8,40 10,44 12,46 M39,34 L37,34"/>
</g></g>
<!-- cell 0,1 airbrush -->
<g clip-path="url(#c01)"><g transform="translate(1023.300,455.400)">
<circle cx="9" cy="46" r="17" fill="#1e1e1e" filter="url(#bb4)"/>
<path d="M41,15 L58,-1 L58,12 L48,24 Z" fill="url(#metal)"/>
<path d="M37,19 L41,15 L48,24 L44,28 Z" fill="#161616"/>
<path d="M25,30 C27,24 32,20 37,19 L44,28 C42,31 36,32 25,31.500 Z" fill="url(#metal)" stroke="#777" stroke-width=".4"/>
<path d="M28,16 L32,15 L35,20 L31,23 Z" fill="#d8d8d8" stroke="#888" stroke-width=".4"/>
<circle cx="43" cy="30" r="1.800" fill="none" stroke="#666" stroke-width=".8"/>
</g></g>
<!-- cell 1,1 pencil -->
<g clip-path="url(#c11)"><g transform="translate(1083.300,455.400)">
<g filter="url(#bb2)"><path d="M22,34 L34,20 L52,0 L60,0 L60,10 L44,28 Z" fill="#5a5a5a"/><path d="M22,34 L30,24 L40,31 Z" fill="#9a9a9a"/><path d="M20,47 C30,52 46,48 58,41" fill="none" stroke="#151515" stroke-width="6" stroke-linecap="round"/></g>
</g></g>
<!-- cell 2,1 thin pen -->
<g clip-path="url(#c21)"><g transform="translate(1143.300,455.400)">
<path d="M5,5 C14,2 14,12 8,20 C2,30 10,36 20,34 C34,32 40,40 34,46 C30,50 28,44 34,40 C40,38 48,40 46,46 C42,54 20,52 14,40" fill="none" stroke="#7a7a7a" stroke-width=".7"/>
<path d="M24.200,31.800 L55,0 L58,0 L58,3 L27,31 Z" fill="#1a1f1c"/>
</g></g>
<!-- cell 3,1 silver pen -->
<g clip-path="url(#c31)"><g transform="translate(1203.300,455.400)">
<path d="M0,30 C4,34 8,30 10,26 C14,20 22,22 22,30 C22,36 14,44 18,48 C14,52 8,54 2,50" fill="none" stroke="#7a7a7a" stroke-width=".7"/>
<path d="M21.900,34.700 L28,25 L34,30 Z" fill="#555"/>
<path d="M28,25 L50,0 L58,0 L58,8 L34,30 Z" fill="url(#metal)"/>
<path d="M36,17 L42,22" stroke="#eee" stroke-width="1"/>
</g></g>
<!-- cell 0,2 hearts -->
<g clip-path="url(#c02)"><g transform="translate(1023.300,515)" fill="none" stroke="#a4e0f2" filter="url(#bb1)">
<path d="M29,46 C16,38 6,26 8,14 C10,4 24,4 29,18 C34,4 50,2 52,14 C54,26 42,38 29,46 Z" stroke-width="3"/>
<path d="M8,54 C4,50 0,46 3,42 C6,39 9,42 9,45 C10,41 14,40 15,43 C16,47 12,51 8,54 Z" stroke-width="1.500"/>
<path d="M46,54 C42,50 38,46 41,42 C44,39 47,42 47,45 C48,41 52,40 53,43 C54,47 50,51 46,54 Z" stroke-width="1.500"/>
</g></g>
<!-- cell 1,2 smudge brush -->
<g clip-path="url(#c12)"><g transform="translate(1083.300,515)">
<g filter="url(#bb1)"><path d="M8,26 L14,16 L18,30 L24,24 L30,38 L48,46 L44,50 L28,46 L20,52 L18,42 L8,44 L12,34 Z" fill="#101010"/><path d="M14,16 L34,44 M8,30 L40,48 M10,40 L30,46" stroke="#1a1a1a" stroke-width="2.500"/></g>
<path d="M58,0 L50,2 C40,10 30,18 28,24 C27,28 34,36 42,35 C46,30 52,18 58,12 Z" fill="url(#mint2)" stroke="#f4fffc" stroke-width=".8"/>
<path d="M32,22 C36,24 40,28 42,34 M38,14 C42,17 46,21 48,26" fill="none" stroke="#fff" stroke-width=".7"/>
</g></g>
<!-- cell 2,2 selected -->
<g clip-path="url(#c22)"><g transform="translate(1142,514)">
<path d="M14,8 L24,10 L16,16 L32,12 L20,28 L36,24 L16,46 L30,44 C40,46 50,44 56,40 C50,50 40,56 30,54 L8,52 L24,32 L8,28 L20,18 L10,18 Z" fill="#ff0820"/>
<path d="M40,6 C40,2 48,2 48,6 C48,9 46,10 46,12 L46,18 L52,30 C53,34 51,36 47,36 L37,36 C33,36 32,33 34,30 L40,18 L40,12 C38,11 37,9 38,7 Z" fill="#ff52c4" stroke="#ff7ad6" stroke-width=".8"/>
<circle cx="46" cy="6" r="3.200" fill="#ff52c4"/>
</g></g>
<!-- cell 3,2 pixel blobs -->
<g clip-path="url(#c32)"><g transform="translate(1203.300,515)">
<path d="M8,22 C10,14 18,12 24,14 C26,20 22,26 20,30 C18,36 10,38 6,34 C4,30 6,26 8,22 Z" fill="#2c2c2c"/>
<path d="M22,44 C24,38 32,36 38,40 C44,42 46,48 42,52 C38,54 34,50 30,50 C26,52 20,50 22,44 Z" fill="#2c2c2c"/>
<circle cx="12" cy="51.500" r="3.500" fill="#2c2c2c"/><circle cx="5" cy="47" r="1.600" fill="#2c2c2c"/>
<path d="M46,6 L56,-2 L60,4 L52,14 Z" fill="#2a2a2a" stroke="#f0f0f0" stroke-width="1"/>
<rect x="29.500" y="12.400" width="20" height="20" rx="2" fill="url(#lime)" stroke="#f4f4f4" stroke-width="1"/>
<path d="M36.200,12.400 V32.400 M42.800,12.400 V32.400 M29.500,19 H49.500 M29.500,25.700 H49.500" stroke="#d8f0a8" stroke-width=".8"/>
</g></g>
<!-- cell 0,3 -->
<g clip-path="url(#c03)"><g transform="translate(1023.300,575.200)">
<path d="M31.800,25.400 L36,17 L54,-1 L58,-1 L58,6 L40,22 Z" fill="#3c3c3c"/>
<path d="M36,17 L54,-1 L56,-1 L38,19 Z" fill="#9a9a9a"/>
<path d="M31.800,25.400 L36,19 L38.500,21.500 Z" fill="#e8e8e8"/>
<path d="M19.800,20.500 C24,20.500 27,24 26,29 C31,28 36,31 36,36.800 C36,42 31,45 26,44 C27,49 24,53 19.800,53 C15.500,53 12.500,49 13.500,44 C8.500,45 3.500,42 3.500,36.800 C3.500,31 8.500,28 13.500,29 C12.500,24 15.500,20.500 19.800,20.500 Z" fill="#b8d8e8" stroke="#5a9ac8" stroke-width=".8"/>
<path d="M19.800,24 L23,29 L19.800,32 L16.600,29 Z M19.800,41.500 L23,44.500 L19.800,49.500 L16.600,44.500 Z M7,36.800 L12,33.600 L15,36.800 L12,40 Z M32.600,36.800 L27.600,33.600 L24.600,36.800 L27.600,40 Z" fill="#f4f4f4" stroke="#888" stroke-width=".5"/>
<circle cx="19.800" cy="36.800" r="2" fill="#f4f4f4" stroke="#888" stroke-width=".5"/>
</g></g>

<!-- THUMBS-END -->
<!-- search -->
<rect x="1022" y="626.500" width="170" height="22" rx="3" fill="#28003c"/>
<rect x="1198" y="629" width="82" height="16" fill="#28003c"/><rect x="1198.700" y="630.200" width="13" height="13" fill="#4a0828"/><path d="M1201.500,634.500 L1204.300,641 L1209,632.500" fill="none" stroke="#ff4c9a" stroke-width="1.500"/>
</svg>
<div class="t pk" style="left:1045.4px;top:355.2px;font-size:12px;letter-spacing:0px;transform:scaleX(0.8889);transform-origin:0 0">Brush Presets</div>
<div class="t pk" style="left:1047.8px;top:375.8px;font-size:12px;letter-spacing:-0.244px">My Favorites</div>
<div class="t" style="left:1214.3px;top:375.8px;color:#f4f4f4;font-size:12px;letter-spacing:0px;transform:scaleX(0.9040);transform-origin:0 0">Tag</div>
<div class="t" style="left:1025.6px;top:631.6px;color:#8a3a86;font-size:12px;letter-spacing:0px;transform:scaleX(0.8940);transform-origin:0 0">Search</div>
<div class="t pk" style="left:1218.6px;top:631.6px;font-size:12px;letter-spacing:-0.234px">Filter in Tag</div>

<!-- DOCKERS -->
<!-- ===== timer watch ===== -->
<div class="abs" style="left:822px;top:533px;width:193px;height:119px;background:#3f0022"></div>
<svg class="abs" style="left:822px;top:533px" width="192" height="119" viewBox="822 533 192 119">
<rect x="823" y="550.300" width="190.600" height="69.500" fill="#37001c"/>
<g fill="#ff4c9a" stroke="#b82868" stroke-width=".6">
<polygon points="864.8,557.3 859.6,562.5 859.6,581.8 864.8,584.4"/>
<polygon points="864.8,585.8 859.6,588.4 859.6,607.7 864.8,612.9"/>
<polygon points="870.7,556.6 898.3,556.6 893.1,561.8 875.9,561.8"/>
<polygon points="899.0,557.3 893.8,562.5 893.8,581.8 899.0,584.4"/>
<polygon points="870.7,585.1 875.9,582.5 893.1,582.5 898.3,585.1 893.1,587.7 875.9,587.7"/>
<polygon points="899.0,585.8 893.8,588.4 893.8,607.7 899.0,612.9"/>
<polygon points="870.7,613.6 898.3,613.6 893.1,608.4 875.9,608.4"/>
<polygon points="938.4,557.3 943.6,562.5 943.6,581.8 938.4,584.4"/>
<polygon points="939.1,585.1 944.3,582.5 961.5,582.5 966.7,585.1 961.5,587.7 944.3,587.7"/>
<polygon points="967.4,557.3 962.2,562.5 962.2,581.8 967.4,584.4"/>
<polygon points="967.4,585.8 962.2,588.4 962.2,607.7 967.4,612.9"/>
<polygon points="972.6,557.3 977.8,562.5 977.8,581.8 972.6,584.4"/>
<polygon points="973.3,585.1 978.5,582.5 995.7,582.5 1000.9,585.1 995.7,587.7 978.5,587.7"/>
<polygon points="1001.6,557.3 996.4,562.5 996.4,581.8 1001.6,584.4"/>
<polygon points="1001.6,585.8 996.4,588.4 996.4,607.7 1001.6,612.9"/>
<rect x="917" y="570" width="5.800" height="5.600"/><rect x="917" y="599" width="5.800" height="5.600"/>
</g>
<path d="M824,622.500 H1013" stroke="#b83070" stroke-width="2" stroke-linecap="round"/>
<g fill="none" stroke="#2a0a4a" stroke-width="1">
<rect x="826.500" y="627.500" width="37" height="22" rx="2"/><rect x="871" y="627.500" width="18" height="19.500" rx="2"/><rect x="891" y="627.500" width="18" height="19.500" rx="2"/><rect x="911.500" y="627.500" width="18" height="19.500" rx="2"/><rect x="993" y="627.500" width="18" height="19.500" rx="2"/>
</g>
<path d="M840.500,634 H849.500 L845,642 Z" fill="#f0f0f0"/>
<circle cx="880" cy="637" r="6.700" fill="none" stroke="#dcdcdc" stroke-width="1.100"/><path d="M878,633.500 L883.500,637 L878,640.500 Z" fill="#dcdcdc"/>
<g fill="none" stroke="#dcdcdc" stroke-width="1.400"><path d="M894,638.500 A6,6 0 0 1 904.500,632.500"/><path d="M906,635.500 A6,6 0 0 1 895.500,641.500"/></g>
<path d="M902,632 L906.500,630.500 L906,635.500 Z M898,642 L893.500,643.500 L894,638.500 Z" fill="#dcdcdc"/>
<circle cx="920.500" cy="637" r="5.200" fill="#dcdcdc"/>
<rect x="935" y="627" width="51.500" height="20" fill="#5a0828"/>
<path d="M996,632.500 H1008 M996,637 H1008 M996,641.500 H1008" stroke="#dcdcdc" stroke-width="1.700"/>
<g fill="none" stroke="#dcdcdc" stroke-width="1.200"><path d="M976.500,540.500 H985.500 V547.500 H976.500 Z"/><path d="M980.500,540.500 V535.500 H989.500 V543.500 H985.500"/></g>
<path d="M1001,537 L1010,546 M1010,537 L1001,546" stroke="#dcdcdc" stroke-width="1.400"/>
</svg>
<div class="t pk" style="left:824.4px;top:535px;font-size:12px;letter-spacing:-0.392px">Timer Watch</div>
<div class="t pk" style="left:939.6px;top:631px;font-size:12px;letter-spacing:0px;transform:scaleX(0.8862);transform-origin:0 0">00:00:00</div>

<div id="statusbar" class="abs"></div>
<div id="taskbar" class="abs"></div>
<!-- ===== title bar ===== -->
<div class="abs" style="left:3.8px;top:6.0px;width:12.4px;height:12.4px;border-radius:50%;background:radial-gradient(circle at 50% 55%,rgba(255,255,255,.85) 0%,rgba(255,255,255,0) 62%),conic-gradient(from 0deg,#f838f0 0deg,#ff70a0 45deg,#ffe040 100deg,#90f040 150deg,#30f0b0 190deg,#28e8f8 225deg,#5898ff 270deg,#b060ff 320deg,#f838f0 360deg)"></div><svg class="abs" style="left:0.8px;top:3.0px" width="18.5" height="18.5" viewBox="-14 -14 28 28"><path d="M-11,-9.500 L-9.500,-10 L0.500,-1.200 L-1.200,1 Z" fill="#3c3c40"/><path d="M0.500,-1.200 L2.800,0.800 L1.200,2.800 L-1.200,1 Z" fill="#b8b8bc"/><path d="M2.800,0.800 C4.500,2 5.200,3.500 5,4.800 C3.500,4.500 2,3.800 1.200,2.800 Z" fill="#141414"/><path d="M5.200,-10.800 L9.800,-6.200 L5.200,-1.600 L0.600,-6.200 Z" fill="#34343a"/><path d="M4,-8.800 H5.800 C7.200,-8.800 7.200,-6.600 5.900,-6.400 C7.600,-6.200 7.500,-3.600 5.800,-3.600 H4 Z" fill="#f4f4f4"/></svg>
<div class="t" style="left:23.5px;top:6px;color:#000;font-size:12px;letter-spacing:-0.020px">miminto.kra (118.3 MiB)&nbsp; * - Krita</div>
<svg class="abs" style="left:1150px;top:-1px" width="130" height="23" viewBox="0 0 130 23" fill="none" stroke="#111" stroke-width="1">
<path d="M8.500,11.500 H18.500"/>
<path d="M54.500,8.500 H62.500 V15.500 H54.500 Z M56.500,8.500 V6.500 H64.500 V13.500 H62.500"/>
<path d="M100,6 L110,16 M110,6 L100,16" stroke-width="1.200"/>
</svg>
<!-- ===== menu bar ===== -->
<div id="menus">
<div class="t m" style="left:10px;font-size:12px;letter-spacing:-0.453px"><u>F</u>ile</div>
<div class="t m" style="left:42px;font-size:12px;letter-spacing:-0.234px"><u>E</u>dit</div>
<div class="t m" style="left:76px;font-size:12px;letter-spacing:-0.271px"><u>V</u>iew</div>
<div class="t m" style="left:115px;font-size:12px;letter-spacing:-0.094px"><u>I</u>mage</div>
<div class="t m" style="left:162.5px;font-size:12px;letter-spacing:0px;transform:scaleX(0.9157);transform-origin:0 0"><u>L</u>ayer</div>
<div class="t m" style="left:204px;font-size:12px;letter-spacing:-0.475px"><u>S</u>elect</div>
<div class="t m" style="left:249px;font-size:12px;letter-spacing:-0.134px">Filte<u>r</u></div>
<div class="t m" style="left:288px;font-size:12px;letter-spacing:-0.004px"><u>T</u>ools</div>
<div class="t m" style="left:330px;font-size:12px;letter-spacing:-0.199px">Setti<u>n</u>gs</div>
<div class="t m" style="left:386px;font-size:12px;letter-spacing:0.263px"><u>W</u>indow</div>
<div class="t m" style="left:444px;font-size:12px;letter-spacing:0.104px"><u>H</u>elp</div>
<div class="t m" style="left:483px;font-size:12px;letter-spacing:-0.386px">Redesign</div>
</div>
<!-- ===== toolbar icons ===== -->
<svg class="abs" style="left:0;top:44px" width="1280" height="36" viewBox="0 44 1280 36">
<defs>
<pattern id="tchk" x="107" y="48" width="8" height="8" patternUnits="userSpaceOnUse"><rect width="8" height="8" fill="#e4e4e4"/><rect width="4" height="4" fill="#9a9a9a"/><rect x="4" y="4" width="4" height="4" fill="#9a9a9a"/></pattern>
<linearGradient id="gsw" x1="0" y1="0" x2="1" y2="0"><stop offset="0" stop-color="#18cf6a"/><stop offset=".35" stop-color="#18cf6a" stop-opacity=".85"/><stop offset="1" stop-color="#18cf6a" stop-opacity=".15"/></linearGradient>
</defs>
<g fill="none" stroke="#dcdcdc" stroke-width="1.300">
<!-- new -->
<path d="M11.500,53.500 H24.500 V64 L20,68.500 H11.500 Z"/><path d="M24.500,64 H20 V68.500 Z" fill="#dcdcdc"/>
<!-- open -->
<path d="M43.500,68.500 V53.500 H50 L52,56 H58.500 V68.500 Z"/><path d="M43.500,53.500 H50 L52,56 H58.500 V58 H43.500 Z" fill="#dcdcdc"/>
<!-- save -->
<path d="M76.500,53.500 H88.500 L91.500,56.500 V68.500 H76.500 Z M80,53.500 V58.500 H88 V53.500 M80,68.500 V62.500 H88.500 V68.500"/>
</g>
<!-- gradient swatch -->
<rect x="107" y="48" width="26" height="26" rx="3" fill="url(#tchk)"/>
<rect x="107" y="48" width="26" height="26" rx="3" fill="url(#gsw)"/>
<!-- pattern swatch -->
<rect x="140" y="48" width="26" height="26" rx="3" fill="#8c8c8c"/>
<!-- fg/bg -->
<rect x="191.500" y="61.500" width="13" height="13" fill="#fff" stroke="#2a0018" stroke-width="1"/>
<rect x="177.500" y="47.500" width="13" height="13" fill="#18d06b" stroke="#a0205c" stroke-width="1"/>
<rect x="181.500" y="66.500" width="7" height="7" fill="#fff" stroke="#111" stroke-width="1"/>
<rect x="178.500" y="62.500" width="7" height="7" fill="#111" stroke="#333" stroke-width="1"/>
<path d="M193,52.500 H201.500 V59 M195.500,50 L193,52.500 L195.500,55 M199,57 L201.500,59.500 L204,57" fill="none" stroke="#ff4c9a" stroke-width="1.500"/>
<!-- brush settings -->
<path d="M220,56 C224,51 227,53 230,54.500 C233,56 236,55 239,52" fill="none" stroke="#dcdcdc" stroke-width="2"/>
<g stroke="#dcdcdc" stroke-width="1.600"><path d="M225.500,60.500 H237.500 M225.500,64.500 H237.500 M225.500,68.500 H237.500"/><path d="M221,60.500 H223 M221,64.500 H223 M221,68.500 H223"/></g>
<!-- brush preset -->
<rect x="252" y="48" width="26" height="26" rx="3" fill="#8a8a8a"/>
<path d="M255,54 L262,53 L258,60 L266,60 L259,67 L270,66 L274,70" fill="none" stroke="#0a0a0a" stroke-width="3" stroke-linejoin="round"/>
<path d="M269,51 L272,51 L272,55 L276,64 Q276,67 272,67 L268,67 Q265,67 266,64 L269,55 Z" fill="#5fe0b0" stroke="#c8f8e8" stroke-width=".8"/>
<!-- blend combobox -->
<path d="M283,73 Q283,75.500 286,75.500 H500 Q503,75.500 503,73" fill="none" stroke="#ff6eb0" stroke-width="1.900"/>
<path d="M493.500,59 L497,62.500 L500.500,59" fill="none" stroke="#b8a0ac" stroke-width="1"/>
<!-- eraser -->
<path d="M526,53 L534,59.500 L526.500,67 H521 L516,62.500 Z" fill="#dcdcdc"/><path d="M517,69 H533" stroke="#dcdcdc" stroke-width="1.200"/>
<!-- alpha checker -->
<g><rect x="551" y="51" width="21" height="21" fill="#dadada"/><rect x="551" y="51" width="7" height="7" fill="#7a7a7a"/><rect x="565" y="51" width="7" height="7" fill="#7a7a7a"/><rect x="558" y="58" width="7" height="7" fill="#7a7a7a"/><rect x="551" y="65" width="7" height="7" fill="#7a7a7a"/><rect x="565" y="65" width="7" height="7" fill="#7a7a7a"/></g>
<!-- reload -->
<g fill="none" stroke="#dcdcdc" stroke-width="1.500"><path d="M589,63 A8,8 0 0 1 603,55.500"/><path d="M605,59 A8,8 0 0 1 591,66.500"/></g>
<path d="M600,55 L605.500,53 L604.500,59 Z M594,67 L588.500,69 L589.500,63 Z" fill="#dcdcdc"/>
<!-- arrows -->
<path d="M620.500,59 H629.500 L625,63.500 Z" fill="#c83c80"/>
<path d="M799.500,59 H808.500 L804,63.500 Z" fill="#c83c80"/>
<!-- opacity slider -->
<rect x="637" y="46" width="155" height="30" fill="#28003c"/>
<rect x="638" y="47" width="139" height="28" fill="#ff2a8a"/>
<path d="M777,60.500 H791 M790.500,47 V75" stroke="#160022" stroke-width="1"/>
<!-- size slider -->
<rect x="816" y="46" width="155" height="30" fill="#28003c"/>
<rect x="817" y="47" width="14" height="28" fill="#ff2a8a"/>
<path d="M956,60.500 H970 M969.500,47 V75" stroke="#160022" stroke-width="1"/>
<!-- mirror H -->
<path d="M980.500,71 L989.500,51 V71 Z M992.500,51 L1001.500,71 H992.500 Z" fill="#dcdcdc"/>
<rect x="1013.500" y="46.500" width="9" height="28" rx="2" fill="#561838" stroke="#6e3050"/>
<path d="M1014.500,59.500 H1021.500 L1018,63 Z" fill="#e0408c"/>
<!-- mirror V -->
<path d="M1036.500,51 L1057,59.500 H1036.500 Z M1036.500,62.500 H1057 L1036.500,71 Z" fill="#dcdcdc"/>
<rect x="1069.500" y="46.500" width="9" height="28" rx="2" fill="#561838" stroke="#6e3050"/>
<path d="M1070.500,59.500 H1077.500 L1074,63 Z" fill="#e0408c"/>
<!-- wrap -->
<path d="M1090,59 H1110 M1096,51 V65 H1105.500 M1105.500,59 V71" fill="none" stroke="#dcdcdc" stroke-width="1.800"/>
<!-- workspace -->
<path d="M1252.500,51.500 H1271.500 V70.500 H1252.500 Z M1252.500,55.500 H1271.500 M1256.500,55.500 V70.500 M1265.500,55.500 V70.500 M1265.500,60.500 H1271.500 M1265.500,65.500 H1271.500" fill="none" stroke="#dcdcdc" stroke-width="1.100"/><rect x="1252" y="51" width="20" height="2.500" fill="#dcdcdc"/>
</svg>
<div class="t pk" style="left:292.5px;top:55px;font-size:12px;letter-spacing:0.166px">Normal</div>
<div class="t" style="left:670.7px;top:56px;color:#fff;font-size:12px;letter-spacing:-0.354px">Opacity: 100%</div>
<div class="t pk" style="left:855.5px;top:56px;font-size:12px;letter-spacing:0px;transform:scaleX(0.8865);transform-origin:0 0">Size: 1.00 px</div>

<!-- ===== status bar ===== -->
<svg class="abs" style="left:0;top:652px" width="1280" height="28" viewBox="0 652 1280 28">
<rect x="4.500" y="657.500" width="14" height="14" fill="none" stroke="#c8b8c0" stroke-width="1"/><circle cx="11.500" cy="664.500" r="4.300" fill="none" stroke="#c8b8c0" stroke-width="1" stroke-dasharray="1.200 1.200"/>
<circle cx="968.500" cy="665" r="10.500" fill="#2c0016" stroke="#6a1440" stroke-width=".7"/><path d="M968.500,655.500 V657.500 M968.500,672.500 V674.500 M959,665 H961 M976,665 H978" stroke="#5a1838" stroke-width="1"/><path d="M967.500,664.600 L978,666" stroke="#e8e8e8" stroke-width="1.200"/><circle cx="967.500" cy="664.600" r="1.200" fill="#e8e8e8"/>
<path d="M1179,665.500 H1217" stroke="#ff5ca4" stroke-width="3" stroke-linecap="round"/><path d="M1228,665.500 H1257" stroke="#9a2860" stroke-width="3" stroke-linecap="round"/>
<rect x="1216.700" y="659.800" width="11.600" height="11.400" rx="2.500" fill="#b8306e" stroke="#6a1440" stroke-width=".8"/>
<path d="M1261.500,660.500 H1276.500 V669.500 H1261.500 Z M1269,669.500 V672 M1264.500,672.500 H1273.500" fill="none" stroke="#dcdcdc" stroke-width="1.200"/><rect x="1268" y="664" width="2" height="2" fill="#f0f0f0"/>
<circle cx="771" cy="666" r="1.800" fill="#ff4c9a"/>
</svg>
<div class="t pk sb" style="left:32.4px;font-size:12px;letter-spacing:0.225px">rfi) Magicfill</div>
<div class="t pk sb" style="left:236px;font-size:12px;letter-spacing:-0.003px">RGB/Alpha (8-bit integer/c...</div>
<div class="t pk sb" style="left:393px;font-size:12px;letter-spacing:-0.219px">sRGB-elle-V2-srgbtrc.icc</div>
<div class="t pk sb" style="left:777.5px;font-size:12px;letter-spacing:0px;transform:scaleX(0.7497);transform-origin:0 0">REC</div>
<div class="t sb" style="left:822.5px;color:#f4f4f4;font-size:12px;letter-spacing:-0.404px">2,480 <u>x</u> 2,677 (118.3 MiB)</div>
<div class="t pk sb" style="left:987.5px;font-size:12px;letter-spacing:0px;transform:scaleX(0.8847);transform-origin:0 0">5.36<span style="font-size:8px;vertical-align:top">°</span></div>
<div class="t pk sb" style="left:1123.5px;font-size:12px;letter-spacing:0px;transform:scaleX(0.8967);transform-origin:0 0">400.0%</div>
<!-- ===== taskbar ===== -->
<div class="abs" style="left:48px;top:680px;width:288px;height:40px;background:#fdeaf2;border-top:1px solid #e8d0dc"></div>
<div class="abs" style="left:534px;top:680px;width:48px;height:40px;background:#ec6098"></div>
<div class="abs" style="left:440px;top:718px;width:40px;height:2px;background:#f6a8c8"></div>
<div class="abs" style="left:534px;top:718px;width:48px;height:2px;background:#f9b8d4"></div>
<svg class="abs" style="left:0;top:680px" width="1280" height="40" viewBox="0 680 1280 40">
<defs>
<linearGradient id="kg2" x1="0" y1="0" x2="1" y2="1"><stop offset="0" stop-color="#ff40d0"/><stop offset=".35" stop-color="#40b0ff"/><stop offset=".65" stop-color="#40e0a0"/><stop offset="1" stop-color="#ffd040"/></linearGradient>
<radialGradient id="bearg" cx=".4" cy=".35" r=".8"><stop offset="0" stop-color="#b09a88"/><stop offset="1" stop-color="#7a6458"/></radialGradient>
</defs>
<!-- windows logo -->
<path d="M16,694.300 L22.800,693.300 V699.600 H16 Z M23.800,693.200 L32.400,692 V699.600 H23.800 Z M16,700.600 H22.800 V706.900 L16,705.900 Z M23.800,700.600 H32.400 V708.200 L23.800,707 Z" fill="#fff"/>
<!-- magnifier -->
<circle cx="71" cy="697.500" r="5.200" fill="none" stroke="#222" stroke-width="1.400"/><path d="M67.300,701.500 L60.500,708.500" stroke="#222" stroke-width="1.500"/>
<!-- bear -->
<g>
<path d="M262,720 C262,706 268,694 278,690 C276,684 284,681 287,686 C293,684 299,687 300,693 C304,697 303,702 298,703 C302,710 303,716 303,720 Z" fill="url(#bearg)"/>
<circle cx="281" cy="686" r="3.500" fill="#8a7466"/><circle cx="296.500" cy="688.500" r="3" fill="#8a7466"/>
<ellipse cx="299" cy="699.500" rx="4" ry="3.300" fill="#c4b0a0"/><circle cx="301.500" cy="698" r="1.500" fill="#2a2020"/>
<circle cx="290.500" cy="693" r="1.800" fill="#1a1418"/><circle cx="290" cy="692.500" r=".6" fill="#fff"/>
<path d="M280,720 C282,710 290,706 298,708 C300,712 300,716 300,720 Z" fill="#b8a492"/>
<path d="M303,720 C306,712 312,704 326,699 C322,706 316,712 310,720 Z" fill="#7ac028"/>
<path d="M306,714 C306,706 308,700 312,696 C313,702 312,708 309,716 Z" fill="#9ad840"/>
<path d="M310,720 C314,714 320,711 328,711 C324,716 320,719 316,720 Z" fill="#5aa818"/>
</g>
<!-- task view -->
<g fill="none" stroke="#fff" stroke-width="1.300"><path d="M352.500,695.500 H362.500 V704.500 H352.500 Z M352,692.800 H363 M352,707.200 H363"/><path d="M366,692.500 V696 M366,698.500 V706.500"/></g>
<!-- folder -->
<path d="M399.600,692 H408 L410,694 H421.600 V708.400 H399.600 Z" fill="#f0a820"/>
<path d="M399.600,695.500 H421.600 V708.400 H399.600 Z" fill="#ffd45a"/>
<path d="M404.500,702 H416.500 V708.400 H404.500 Z" fill="#3a9ae8"/><path d="M408,705 H413 V708.400 H408 Z" fill="#ffd45a"/>
<!-- chrome -->
<circle cx="459.600" cy="700" r="12" fill="#ea4335"/>
<path d="M459.600,700 L449.200,706 A12,12 0 0 0 459.600,712 L465.600,702 Z" fill="#34a853"/>
<path d="M459.600,712 A12,12 0 0 0 470,694 L459.600,694 L465,703 Z" fill="#fbbc04"/>
<path d="M449.200,706 A12,12 0 0 1 449.200,694 L455,703 Z" fill="#34a853"/>
<path d="M449.200,694 A12,12 0 0 1 470,694 L459.600,694 Z" fill="#ea4335"/>
<circle cx="459.600" cy="700" r="5.600" fill="#fff"/><circle cx="459.600" cy="700" r="4.400" fill="#4285f4"/>
<!-- discord -->
<circle cx="508.700" cy="700" r="12" fill="#5865f2"/>
<path d="M502,696.500 C504,695 506,694.600 508.700,694.600 C511.400,694.600 513.400,695 515.400,696.500 C517,699 517.600,702 517.400,704.500 C516,705.600 514.600,706.200 513,706.400 L512,704.800 C510,705.400 507.400,705.400 505.400,704.800 L504.400,706.400 C502.800,706.200 501.400,705.600 500,704.500 C499.800,702 500.400,699 502,696.500 Z" fill="#fff"/>
<ellipse cx="506" cy="701" rx="1.500" ry="1.800" fill="#5865f2"/><ellipse cx="511.400" cy="701" rx="1.500" ry="1.800" fill="#5865f2"/>
<!-- krita -->
<!-- weather -->
<circle cx="826" cy="700" r="9.500" fill="#ffa01c"/><circle cx="824" cy="698" r="6" fill="#ffb838" opacity=".7"/>
<path d="M815.500,696.500 C812.500,696.500 812.500,692 816,692 C816.500,688 822,687.500 823.500,691 C827,689.500 829.500,693 827.500,696.500 Z" fill="#b8cdf0"/>
<path d="M826.500,709 C823,709 823,704.500 826.500,704 C827.500,700 833.500,700 834.500,703.500 C838.500,703 840,709 836,709 Z" fill="#b4caee"/>
<!-- tray -->
<path d="M983.500,703.500 L989,698 L994.500,703.500" fill="none" stroke="#fff" stroke-width="1.300"/>
<g fill="none" stroke="#fff" stroke-width="1.100"><rect x="1008.500" y="696.500" width="7.500" height="8.500" rx="1.500"/><path d="M1016,699.500 L1019,697.500 V704 L1016,702"/><path d="M1009.500,694 C1011,692.500 1013.500,692.500 1015,694 M1009.500,707.500 C1011,709 1013.500,709 1015,707.500"/></g>
<path d="M1032,706 C1028,706 1028,701 1032,700.500 C1033,696 1040,695.500 1041,700 C1046,699.500 1047,706 1042,706 Z" fill="#f4e8f0"/>
<g fill="none" stroke="#fff" stroke-width="1.100"><rect x="1058.500" y="696.500" width="9.500" height="8"/><path d="M1069,699 V702.500"/><path d="M1052,699 H1056 M1052,702 H1056 M1056,697.500 V703.500 H1058"/></g>
<g fill="none" stroke="#fff" stroke-width="1.200"><path d="M1080,706 A12,12 0 0 1 1092.500,694.500" opacity=".55"/><path d="M1083.500,706.500 A8.500,8.500 0 0 1 1092.500,698.500"/><path d="M1087,706.500 A5,5 0 0 1 1092.500,702"/></g><circle cx="1091.500" cy="706" r="1.300" fill="#fff"/>
<g fill="none" stroke="#fff" stroke-width="1.100"><path d="M1101.500,698 H1104.500 L1108.500,694.500 V707.500 L1104.500,704 H1101.500 Z"/><path d="M1111,698 C1112.500,699.500 1112.500,702.500 1111,704 M1113.500,695.500 C1116.500,698.500 1116.500,703.500 1113.500,706.500"/></g>
<!-- notifications -->
<path d="M1239.500,692.500 H1255.500 V704 H1244 L1239.500,707.500 Z" fill="#fff"/><path d="M1242.500,696 H1252.500 M1242.500,698.800 H1252.500 M1242.500,701.500 H1249" stroke="#de4e88" stroke-width="1"/>
<circle cx="1254.400" cy="706.700" r="7.300" fill="#f27eb0"/><path d="M1275.500,680 V720" stroke="#e878a8" stroke-width="1"/>
</svg>
<div class="abs" style="left:548.4px;top:690.6px;width:18.8px;height:18.8px;border-radius:50%;background:radial-gradient(circle at 50% 55%,rgba(255,255,255,.85) 0%,rgba(255,255,255,0) 62%),conic-gradient(from 0deg,#f838f0 0deg,#ff70a0 45deg,#ffe040 100deg,#90f040 150deg,#30f0b0 190deg,#28e8f8 225deg,#5898ff 270deg,#b060ff 320deg,#f838f0 360deg)"></div><svg class="abs" style="left:543.8px;top:686.0px" width="28.0" height="28.0" viewBox="-14 -14 28 28"><path d="M-11,-9.500 L-9.500,-10 L0.500,-1.200 L-1.200,1 Z" fill="#3c3c40"/><path d="M0.500,-1.200 L2.800,0.800 L1.200,2.800 L-1.200,1 Z" fill="#b8b8bc"/><path d="M2.800,0.800 C4.500,2 5.200,3.500 5,4.800 C3.500,4.500 2,3.800 1.200,2.800 Z" fill="#141414"/><path d="M5.200,-10.800 L9.800,-6.200 L5.200,-1.600 L0.600,-6.200 Z" fill="#34343a"/><path d="M4,-8.800 H5.800 C7.200,-8.800 7.200,-6.600 5.900,-6.400 C7.600,-6.200 7.500,-3.600 5.800,-3.600 H4 Z" fill="#f4f4f4"/></svg>
<div class="t" style="left:89px;top:693px;color:#2a2a2a;font-size:15px;letter-spacing:-0.327px">Type here to search</div>
<div class="t" style="left:845.7px;top:692.5px;color:#fff;font-size:15px;letter-spacing:0px;transform:scaleX(0.8742);transform-origin:0 0">30°C</div>
<div class="t" style="left:884px;top:692.5px;color:#fff;font-size:15px;letter-spacing:0px;transform:scaleX(0.8965);transform-origin:0 0">Partly sunny</div>
<div class="t" style="left:1127px;top:694px;color:#fff;font-size:12px;letter-spacing:0px;transform:scaleX(0.8841);transform-origin:0 0">ENG</div>
<div class="t" style="left:1171px;top:685px;color:#fff;font-size:12px;letter-spacing:-0.310px">1:44 pm</div>
<div class="t" style="left:1163px;top:702px;color:#fff;font-size:12px;letter-spacing:-0.262px">07/10/2023</div>
<div class="t" style="left:1251px;top:701px;font-size:11px;color:#fff;font-weight:bold">2</div>

<!-- ===== document tab bar ===== -->
<div class="abs" style="left:19px;top:84px;width:996px;height:20px;background:#3f0022;border-radius:0 4px 0 0"></div>
<svg class="abs" style="left:19px;top:84px" width="996" height="40" viewBox="19 84 996 40">
<defs><linearGradient id="kg3" x1="0" y1="0" x2="1" y2="1"><stop offset="0" stop-color="#ff40d0"/><stop offset=".35" stop-color="#40b0ff"/><stop offset=".65" stop-color="#40e0a0"/><stop offset="1" stop-color="#ffd040"/></linearGradient></defs>
<path d="M994.500,89 L1006.500,101 M1006.500,89 L994.500,101" stroke="#e4e4e4" stroke-width="1.700"/>
<rect x="997.500" y="108" width="13.500" height="13.500" rx="3" fill="#46544c"/><path d="M1002,115 L1006.500,111 V119 Z" fill="#c8508c"/>
</svg>
<div class="abs" style="left:20.6px;top:86.6px;width:12.8px;height:12.8px;border-radius:50%;background:radial-gradient(circle at 50% 55%,rgba(255,255,255,.85) 0%,rgba(255,255,255,0) 62%),conic-gradient(from 0deg,#f838f0 0deg,#ff70a0 45deg,#ffe040 100deg,#90f040 150deg,#30f0b0 190deg,#28e8f8 225deg,#5898ff 270deg,#b060ff 320deg,#f838f0 360deg)"></div><svg class="abs" style="left:17.5px;top:83.5px" width="19.1" height="19.1" viewBox="-14 -14 28 28"><path d="M-11,-9.500 L-9.500,-10 L0.500,-1.200 L-1.200,1 Z" fill="#3c3c40"/><path d="M0.500,-1.200 L2.800,0.800 L1.200,2.800 L-1.200,1 Z" fill="#b8b8bc"/><path d="M2.800,0.800 C4.500,2 5.200,3.500 5,4.800 C3.500,4.500 2,3.800 1.200,2.800 Z" fill="#141414"/><path d="M5.200,-10.800 L9.800,-6.200 L5.200,-1.600 L0.600,-6.200 Z" fill="#34343a"/><path d="M4,-8.800 H5.800 C7.200,-8.800 7.200,-6.600 5.900,-6.400 C7.600,-6.200 7.500,-3.600 5.800,-3.600 H4 Z" fill="#f4f4f4"/></svg>
<svg class="abs" style="left:12px;top:355px" width="8" height="24" viewBox="0 0 8 24"><path d="M3.500,4 V20" stroke="#a08898" stroke-width="1" stroke-dasharray="1.500 1.500"/></svg>
<div class="t pk" style="left:478.5px;top:88px;font-size:12px;letter-spacing:0.207px">miminto.kra *</div>

<!-- TEXTS -->
</body>
</html>
